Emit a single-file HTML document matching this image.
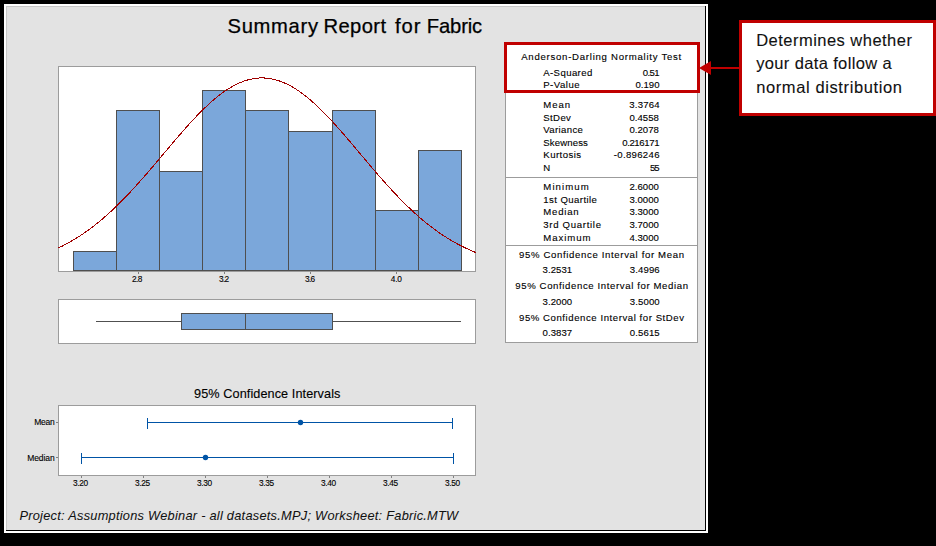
<!DOCTYPE html>
<html><head><meta charset="utf-8"><style>
html,body{margin:0;padding:0;background:#000;width:936px;height:546px;overflow:hidden}
svg{display:block}
</style></head><body>
<svg width="936" height="546" viewBox="0 0 936 546" font-family="'Liberation Sans', sans-serif">
<rect x="0" y="0" width="936" height="546" fill="#000"/>
<rect x="4" y="4" width="704" height="529" fill="#fff"/>
<rect x="6" y="6" width="700" height="525" fill="#000"/>
<rect x="6" y="6" width="699" height="524" fill="#C8C8C8"/>
<rect x="7" y="7" width="698" height="523" fill="#E3E3E3"/>
<g fill="#000" stroke="#000" stroke-width="0.25"><text x="227.50" y="33" font-size="20.2" textLength="90.50" lengthAdjust="spacing">Summary</text><text x="323.50" y="33" font-size="20.2" textLength="62.50" lengthAdjust="spacing">Report</text><text x="395.00" y="33" font-size="20.2" textLength="25.60" lengthAdjust="spacing">for</text><text x="426.80" y="33" font-size="20.2" textLength="55.40" lengthAdjust="spacing">Fabric</text></g>
<!-- histogram -->
<rect x="58.5" y="66.5" width="417" height="205" fill="#fff" stroke="#9C9C9C"/>
<rect x="73.5" y="251.5" width="43" height="19" fill="#7BA7DA" stroke="#4F4F4F" stroke-width="1"/><rect x="116.5" y="110.5" width="43" height="160" fill="#7BA7DA" stroke="#4F4F4F" stroke-width="1"/><rect x="159.5" y="171.5" width="43" height="99" fill="#7BA7DA" stroke="#4F4F4F" stroke-width="1"/><rect x="202.5" y="90.5" width="43" height="180" fill="#7BA7DA" stroke="#4F4F4F" stroke-width="1"/><rect x="245.5" y="110.5" width="43" height="160" fill="#7BA7DA" stroke="#4F4F4F" stroke-width="1"/><rect x="288.5" y="131.5" width="44" height="139" fill="#7BA7DA" stroke="#4F4F4F" stroke-width="1"/><rect x="332.5" y="110.5" width="43" height="160" fill="#7BA7DA" stroke="#4F4F4F" stroke-width="1"/><rect x="375.5" y="210.5" width="43" height="60" fill="#7BA7DA" stroke="#4F4F4F" stroke-width="1"/><rect x="418.5" y="150.5" width="43" height="120" fill="#7BA7DA" stroke="#4F4F4F" stroke-width="1"/>
<svg x="58" y="66" width="418" height="206" viewBox="58 66 418 206" overflow="hidden">
<polyline points="56.0,249.08 56.5,248.85 57.0,248.62 57.5,248.39 58.0,248.15 58.5,247.92 59.0,247.68 59.5,247.44 60.0,247.19 60.5,246.95 61.0,246.70 61.5,246.45 62.0,246.20 62.5,245.95 63.0,245.70 63.5,245.44 64.0,245.18 64.5,244.92 65.0,244.66 65.5,244.39 66.0,244.13 66.5,243.86 67.0,243.59 67.5,243.32 68.0,243.04 68.5,242.76 69.0,242.48 69.5,242.20 70.0,241.92 70.5,241.64 71.0,241.35 71.5,241.06 72.0,240.77 72.5,240.47 73.0,240.18 73.5,239.88 74.0,239.58 74.5,239.28 75.0,238.97 75.5,238.67 76.0,238.36 76.5,238.05 77.0,237.74 77.5,237.42 78.0,237.10 78.5,236.79 79.0,236.46 79.5,236.14 80.0,235.81 80.5,235.49 81.0,235.16 81.5,234.82 82.0,234.49 82.5,234.15 83.0,233.81 83.5,233.47 84.0,233.13 84.5,232.78 85.0,232.44 85.5,232.09 86.0,231.73 86.5,231.38 87.0,231.02 87.5,230.67 88.0,230.30 88.5,229.94 89.0,229.58 89.5,229.21 90.0,228.84 90.5,228.47 91.0,228.09 91.5,227.72 92.0,227.34 92.5,226.96 93.0,226.57 93.5,226.19 94.0,225.80 94.5,225.41 95.0,225.02 95.5,224.62 96.0,224.23 96.5,223.83 97.0,223.43 97.5,223.02 98.0,222.62 98.5,222.21 99.0,221.80 99.5,221.39 100.0,220.97 100.5,220.56 101.0,220.14 101.5,219.72 102.0,219.30 102.5,218.87 103.0,218.44 103.5,218.01 104.0,217.58 104.5,217.15 105.0,216.71 105.5,216.27 106.0,215.83 106.5,215.39 107.0,214.95 107.5,214.50 108.0,214.05 108.5,213.60 109.0,213.15 109.5,212.69 110.0,212.23 110.5,211.77 111.0,211.31 111.5,210.85 112.0,210.38 112.5,209.91 113.0,209.44 113.5,208.97 114.0,208.50 114.5,208.02 115.0,207.54 115.5,207.06 116.0,206.58 116.5,206.10 117.0,205.61 117.5,205.12 118.0,204.63 118.5,204.14 119.0,203.65 119.5,203.15 120.0,202.65 120.5,202.15 121.0,201.65 121.5,201.15 122.0,200.64 122.5,200.14 123.0,199.63 123.5,199.12 124.0,198.60 124.5,198.09 125.0,197.57 125.5,197.06 126.0,196.54 126.5,196.01 127.0,195.49 127.5,194.97 128.0,194.44 128.5,193.91 129.0,193.38 129.5,192.85 130.0,192.32 130.5,191.78 131.0,191.24 131.5,190.71 132.0,190.17 132.5,189.62 133.0,189.08 133.5,188.54 134.0,187.99 134.5,187.44 135.0,186.89 135.5,186.34 136.0,185.79 136.5,185.24 137.0,184.69 137.5,184.13 138.0,183.57 138.5,183.01 139.0,182.45 139.5,181.89 140.0,181.33 140.5,180.77 141.0,180.20 141.5,179.64 142.0,179.07 142.5,178.50 143.0,177.93 143.5,177.36 144.0,176.79 144.5,176.21 145.0,175.64 145.5,175.07 146.0,174.49 146.5,173.91 147.0,173.33 147.5,172.76 148.0,172.18 148.5,171.60 149.0,171.01 149.5,170.43 150.0,169.85 150.5,169.26 151.0,168.68 151.5,168.10 152.0,167.51 152.5,166.92 153.0,166.34 153.5,165.75 154.0,165.16 154.5,164.57 155.0,163.98 155.5,163.39 156.0,162.80 156.5,162.21 157.0,161.62 157.5,161.02 158.0,160.43 158.5,159.84 159.0,159.25 159.5,158.65 160.0,158.06 160.5,157.47 161.0,156.87 161.5,156.28 162.0,155.68 162.5,155.09 163.0,154.50 163.5,153.90 164.0,153.31 164.5,152.71 165.0,152.12 165.5,151.52 166.0,150.93 166.5,150.34 167.0,149.74 167.5,149.15 168.0,148.56 168.5,147.96 169.0,147.37 169.5,146.78 170.0,146.19 170.5,145.59 171.0,145.00 171.5,144.41 172.0,143.82 172.5,143.23 173.0,142.64 173.5,142.05 174.0,141.47 174.5,140.88 175.0,140.29 175.5,139.71 176.0,139.12 176.5,138.54 177.0,137.95 177.5,137.37 178.0,136.79 178.5,136.21 179.0,135.63 179.5,135.05 180.0,134.47 180.5,133.90 181.0,133.32 181.5,132.75 182.0,132.17 182.5,131.60 183.0,131.03 183.5,130.46 184.0,129.89 184.5,129.33 185.0,128.76 185.5,128.20 186.0,127.64 186.5,127.07 187.0,126.51 187.5,125.96 188.0,125.40 188.5,124.85 189.0,124.29 189.5,123.74 190.0,123.19 190.5,122.64 191.0,122.10 191.5,121.55 192.0,121.01 192.5,120.47 193.0,119.93 193.5,119.40 194.0,118.86 194.5,118.33 195.0,117.80 195.5,117.27 196.0,116.75 196.5,116.22 197.0,115.70 197.5,115.18 198.0,114.66 198.5,114.15 199.0,113.64 199.5,113.13 200.0,112.62 200.5,112.11 201.0,111.61 201.5,111.11 202.0,110.61 202.5,110.12 203.0,109.63 203.5,109.14 204.0,108.65 204.5,108.17 205.0,107.68 205.5,107.21 206.0,106.73 206.5,106.26 207.0,105.79 207.5,105.32 208.0,104.86 208.5,104.40 209.0,103.94 209.5,103.48 210.0,103.03 210.5,102.58 211.0,102.14 211.5,101.69 212.0,101.25 212.5,100.82 213.0,100.39 213.5,99.96 214.0,99.53 214.5,99.11 215.0,98.69 215.5,98.27 216.0,97.86 216.5,97.45 217.0,97.05 217.5,96.65 218.0,96.25 218.5,95.85 219.0,95.46 219.5,95.07 220.0,94.69 220.5,94.31 221.0,93.93 221.5,93.56 222.0,93.19 222.5,92.83 223.0,92.47 223.5,92.11 224.0,91.76 224.5,91.41 225.0,91.06 225.5,90.72 226.0,90.39 226.5,90.05 227.0,89.72 227.5,89.40 228.0,89.08 228.5,88.76 229.0,88.45 229.5,88.14 230.0,87.84 230.5,87.54 231.0,87.24 231.5,86.95 232.0,86.66 232.5,86.38 233.0,86.10 233.5,85.83 234.0,85.56 234.5,85.29 235.0,85.03 235.5,84.78 236.0,84.53 236.5,84.28 237.0,84.04 237.5,83.80 238.0,83.56 238.5,83.33 239.0,83.11 239.5,82.89 240.0,82.67 240.5,82.46 241.0,82.26 241.5,82.05 242.0,81.86 242.5,81.67 243.0,81.48 243.5,81.30 244.0,81.12 244.5,80.94 245.0,80.78 245.5,80.61 246.0,80.45 246.5,80.30 247.0,80.15 247.5,80.00 248.0,79.86 248.5,79.73 249.0,79.60 249.5,79.47 250.0,79.35 250.5,79.24 251.0,79.13 251.5,79.02 252.0,78.92 252.5,78.83 253.0,78.73 253.5,78.65 254.0,78.57 254.5,78.49 255.0,78.42 255.5,78.35 256.0,78.29 256.5,78.24 257.0,78.18 257.5,78.14 258.0,78.10 258.5,78.06 259.0,78.03 259.5,78.00 260.0,77.98 260.5,77.96 261.0,77.95 261.5,77.95 262.0,77.94 262.5,77.95 263.0,77.96 263.5,77.97 264.0,77.99 264.5,78.01 265.0,78.04 265.5,78.07 266.0,78.11 266.5,78.15 267.0,78.20 267.5,78.25 268.0,78.31 268.5,78.38 269.0,78.44 269.5,78.52 270.0,78.59 270.5,78.68 271.0,78.77 271.5,78.86 272.0,78.96 272.5,79.06 273.0,79.17 273.5,79.28 274.0,79.40 274.5,79.52 275.0,79.64 275.5,79.78 276.0,79.91 276.5,80.05 277.0,80.20 277.5,80.35 278.0,80.51 278.5,80.67 279.0,80.83 279.5,81.00 280.0,81.18 280.5,81.36 281.0,81.54 281.5,81.73 282.0,81.93 282.5,82.12 283.0,82.33 283.5,82.54 284.0,82.75 284.5,82.97 285.0,83.19 285.5,83.41 286.0,83.64 286.5,83.88 287.0,84.12 287.5,84.36 288.0,84.61 288.5,84.87 289.0,85.12 289.5,85.39 290.0,85.65 290.5,85.92 291.0,86.20 291.5,86.48 292.0,86.76 292.5,87.05 293.0,87.34 293.5,87.64 294.0,87.94 294.5,88.25 295.0,88.56 295.5,88.87 296.0,89.19 296.5,89.51 297.0,89.84 297.5,90.17 298.0,90.50 298.5,90.84 299.0,91.18 299.5,91.53 300.0,91.88 300.5,92.24 301.0,92.59 301.5,92.96 302.0,93.32 302.5,93.69 303.0,94.07 303.5,94.44 304.0,94.82 304.5,95.21 305.0,95.60 305.5,95.99 306.0,96.39 306.5,96.78 307.0,97.19 307.5,97.59 308.0,98.00 308.5,98.42 309.0,98.83 309.5,99.26 310.0,99.68 310.5,100.11 311.0,100.54 311.5,100.97 312.0,101.41 312.5,101.85 313.0,102.29 313.5,102.74 314.0,103.19 314.5,103.64 315.0,104.10 315.5,104.56 316.0,105.02 316.5,105.48 317.0,105.95 317.5,106.42 318.0,106.90 318.5,107.37 319.0,107.85 319.5,108.33 320.0,108.82 320.5,109.31 321.0,109.80 321.5,110.29 322.0,110.79 322.5,111.29 323.0,111.79 323.5,112.29 324.0,112.80 324.5,113.30 325.0,113.81 325.5,114.33 326.0,114.84 326.5,115.36 327.0,115.88 327.5,116.40 328.0,116.93 328.5,117.46 329.0,117.98 329.5,118.52 330.0,119.05 330.5,119.58 331.0,120.12 331.5,120.66 332.0,121.20 332.5,121.74 333.0,122.29 333.5,122.83 334.0,123.38 334.5,123.93 335.0,124.49 335.5,125.04 336.0,125.59 336.5,126.15 337.0,126.71 337.5,127.27 338.0,127.83 338.5,128.39 339.0,128.96 339.5,129.52 340.0,130.09 340.5,130.66 341.0,131.23 341.5,131.80 342.0,132.37 342.5,132.95 343.0,133.52 343.5,134.10 344.0,134.67 344.5,135.25 345.0,135.83 345.5,136.41 346.0,136.99 346.5,137.57 347.0,138.16 347.5,138.74 348.0,139.33 348.5,139.91 349.0,140.50 349.5,141.08 350.0,141.67 350.5,142.26 351.0,142.85 351.5,143.44 352.0,144.03 352.5,144.62 353.0,145.21 353.5,145.80 354.0,146.39 354.5,146.98 355.0,147.58 355.5,148.17 356.0,148.76 356.5,149.36 357.0,149.95 357.5,150.54 358.0,151.14 358.5,151.73 359.0,152.33 359.5,152.92 360.0,153.51 360.5,154.11 361.0,154.70 361.5,155.30 362.0,155.89 362.5,156.49 363.0,157.08 363.5,157.67 364.0,158.27 364.5,158.86 365.0,159.45 365.5,160.05 366.0,160.64 366.5,161.23 367.0,161.82 367.5,162.41 368.0,163.00 368.5,163.60 369.0,164.19 369.5,164.77 370.0,165.36 370.5,165.95 371.0,166.54 371.5,167.13 372.0,167.71 372.5,168.30 373.0,168.88 373.5,169.47 374.0,170.05 374.5,170.63 375.0,171.22 375.5,171.80 376.0,172.38 376.5,172.96 377.0,173.54 377.5,174.11 378.0,174.69 378.5,175.27 379.0,175.84 379.5,176.41 380.0,176.99 380.5,177.56 381.0,178.13 381.5,178.70 382.0,179.27 382.5,179.83 383.0,180.40 383.5,180.96 384.0,181.53 384.5,182.09 385.0,182.65 385.5,183.21 386.0,183.77 386.5,184.32 387.0,184.88 387.5,185.43 388.0,185.99 388.5,186.54 389.0,187.09 389.5,187.63 390.0,188.18 390.5,188.73 391.0,189.27 391.5,189.81 392.0,190.35 392.5,190.89 393.0,191.43 393.5,191.97 394.0,192.50 394.5,193.03 395.0,193.57 395.5,194.09 396.0,194.62 396.5,195.15 397.0,195.67 397.5,196.20 398.0,196.72 398.5,197.24 399.0,197.75 399.5,198.27 400.0,198.78 400.5,199.30 401.0,199.81 401.5,200.31 402.0,200.82 402.5,201.32 403.0,201.83 403.5,202.33 404.0,202.83 404.5,203.32 405.0,203.82 405.5,204.31 406.0,204.80 406.5,205.29 407.0,205.78 407.5,206.27 408.0,206.75 408.5,207.23 409.0,207.71 409.5,208.19 410.0,208.66 410.5,209.14 411.0,209.61 411.5,210.08 412.0,210.54 412.5,211.01 413.0,211.47 413.5,211.93 414.0,212.39 414.5,212.85 415.0,213.30 415.5,213.76 416.0,214.21 416.5,214.65 417.0,215.10 417.5,215.54 418.0,215.99 418.5,216.43 419.0,216.86 419.5,217.30 420.0,217.73 420.5,218.16 421.0,218.59 421.5,219.02 422.0,219.44 422.5,219.87 423.0,220.29 423.5,220.70 424.0,221.12 424.5,221.53 425.0,221.94 425.5,222.35 426.0,222.76 426.5,223.16 427.0,223.57 427.5,223.97 428.0,224.36 428.5,224.76 429.0,225.15 429.5,225.55 430.0,225.93 430.5,226.32 431.0,226.71 431.5,227.09 432.0,227.47 432.5,227.85 433.0,228.22 433.5,228.60 434.0,228.97 434.5,229.34 435.0,229.70 435.5,230.07 436.0,230.43 436.5,230.79 437.0,231.15 437.5,231.50 438.0,231.86 438.5,232.21 439.0,232.56 439.5,232.91 440.0,233.25 440.5,233.59 441.0,233.93 441.5,234.27 442.0,234.61 442.5,234.94 443.0,235.27 443.5,235.60 444.0,235.93 444.5,236.25 445.0,236.58 445.5,236.90 446.0,237.22 446.5,237.53 447.0,237.85 447.5,238.16 448.0,238.47 448.5,238.78 449.0,239.08 449.5,239.38 450.0,239.69 450.5,239.98 451.0,240.28 451.5,240.58 452.0,240.87 452.5,241.16 453.0,241.45 453.5,241.74 454.0,242.02 454.5,242.30 455.0,242.58 455.5,242.86 456.0,243.14 456.5,243.41 457.0,243.68 457.5,243.95 458.0,244.22 458.5,244.49 459.0,244.75 459.5,245.01 460.0,245.27 460.5,245.53 461.0,245.79 461.5,246.04 462.0,246.29 462.5,246.54 463.0,246.79 463.5,247.04 464.0,247.28 464.5,247.52 465.0,247.76 465.5,248.00 466.0,248.24 466.5,248.47 467.0,248.70 467.5,248.93 468.0,249.16 468.5,249.39 469.0,249.61 469.5,249.84 470.0,250.06 470.5,250.28 471.0,250.50 471.5,250.71 472.0,250.92 472.5,251.14 473.0,251.35 473.5,251.56 474.0,251.76 474.5,251.97 475.0,252.17 475.5,252.37 476.0,252.57 476.5,252.77 477.0,252.97" fill="none" stroke="#A00000" stroke-width="1" shape-rendering="crispEdges"/>
</svg>
<!-- boxplot -->
<rect x="58.5" y="299.5" width="417" height="44" fill="#fff" stroke="#9C9C9C"/>
<rect x="96" y="321" width="365" height="1" fill="#505050"/>
<rect x="181.5" y="313.5" width="151" height="16" fill="#7BA7DA" stroke="#4F4F4F"/>
<rect x="245" y="313" width="1" height="17" fill="#4F4F4F"/>
<!-- CI -->
<rect x="58.5" y="405.5" width="417" height="70" fill="#fff" stroke="#9C9C9C"/>
<rect x="56" y="422" width="2" height="1" fill="#808080"/>
<rect x="56" y="457" width="2" height="1" fill="#808080"/>
<g fill="#0054A6">
<rect x="147" y="422" width="306" height="1"/>
<rect x="147" y="418" width="1" height="11"/>
<rect x="452" y="418" width="1" height="11"/>
<circle cx="300.5" cy="422.5" r="2.7"/>
<rect x="81" y="457" width="373" height="1"/>
<rect x="81" y="453" width="1" height="11"/>
<rect x="453" y="453" width="1" height="11"/>
<circle cx="205.5" cy="457.5" r="2.7"/>
</g>
<rect x="138" y="272" width="1" height="2" fill="#808080"/><rect x="224" y="272" width="1" height="2" fill="#808080"/><rect x="310" y="272" width="1" height="2" fill="#808080"/><rect x="396" y="272" width="1" height="2" fill="#808080"/><rect x="81" y="476" width="1" height="2" fill="#808080"/><rect x="143" y="476" width="1" height="2" fill="#808080"/><rect x="205" y="476" width="1" height="2" fill="#808080"/><rect x="267" y="476" width="1" height="2" fill="#808080"/><rect x="329" y="476" width="1" height="2" fill="#808080"/><rect x="391" y="476" width="1" height="2" fill="#808080"/><rect x="453" y="476" width="1" height="2" fill="#808080"/>
<!-- stats table -->
<rect x="505.5" y="42.5" width="192" height="300" fill="#fff" stroke="#9C9C9C"/>
<rect x="506" y="177" width="191" height="1" fill="#9C9C9C"/>
<rect x="506" y="245" width="191" height="1" fill="#9C9C9C"/>
<g fill="#000" stroke="#000" stroke-width="0.12"><text x="521.20" y="60" font-size="9.6" textLength="160.00" lengthAdjust="spacing">Anderson-Darling Normality Test</text><text x="543.20" y="75.7" font-size="9.6" textLength="49.10" lengthAdjust="spacing">A-Squared</text><text x="642.70" y="75.7" font-size="9.6" textLength="16.80" lengthAdjust="spacing">0.51</text><text x="543.20" y="87.6" font-size="9.6" textLength="36.50" lengthAdjust="spacing">P-Value</text><text x="635.50" y="87.6" font-size="9.6">0.190</text><text x="543.30" y="108" font-size="9.6" textLength="26.70" lengthAdjust="spacing">Mean</text><text x="629.30" y="108" font-size="9.6" textLength="30.20" lengthAdjust="spacing">3.3764</text><text x="543.30" y="120.6" font-size="9.6" textLength="27.60" lengthAdjust="spacing">StDev</text><text x="629.50" y="120.6" font-size="9.6">0.4558</text><text x="543.30" y="133.1" font-size="9.6" textLength="39.60" lengthAdjust="spacing">Variance</text><text x="629.50" y="133.1" font-size="9.6">0.2078</text><text x="543.30" y="145.7" font-size="9.6" textLength="44.60" lengthAdjust="spacing">Skewness</text><text x="622.20" y="145.7" font-size="9.6" textLength="37.30" lengthAdjust="spacing">0.216171</text><text x="543.30" y="158.2" font-size="9.6" textLength="37.80" lengthAdjust="spacing">Kurtosis</text><text x="613.80" y="158.2" font-size="9.6" textLength="45.70" lengthAdjust="spacing">-0.896246</text><text x="543.30" y="170.8" font-size="9.6" textLength="7.20" lengthAdjust="spacing">N</text><text x="649.90" y="170.8" font-size="9.6" textLength="9.60" lengthAdjust="spacing">55</text><text x="543.30" y="189.6" font-size="9.6" textLength="45.50" lengthAdjust="spacing">Minimum</text><text x="629.50" y="189.6" font-size="9.6">2.6000</text><text x="543.30" y="202.8" font-size="9.6" textLength="53.60" lengthAdjust="spacing">1st Quartile</text><text x="629.50" y="202.8" font-size="9.6">3.0000</text><text x="543.30" y="215.4" font-size="9.6" textLength="35.40" lengthAdjust="spacing">Median</text><text x="629.50" y="215.4" font-size="9.6">3.3000</text><text x="543.30" y="227.7" font-size="9.6" textLength="57.70" lengthAdjust="spacing">3rd Quartile</text><text x="629.50" y="227.7" font-size="9.6">3.7000</text><text x="543.30" y="240.8" font-size="9.6" textLength="47.30" lengthAdjust="spacing">Maximum</text><text x="629.50" y="240.8" font-size="9.6">4.3000</text><text x="519.00" y="257.5" font-size="9.6" textLength="165.00" lengthAdjust="spacing">95% Confidence Interval for Mean</text><text x="542.60" y="273.2" font-size="9.6" textLength="29.60" lengthAdjust="spacing">3.2531</text><text x="629.70" y="273.2" font-size="9.6" textLength="30.00" lengthAdjust="spacing">3.4996</text><text x="515.30" y="288.9" font-size="9.6" textLength="172.70" lengthAdjust="spacing">95% Confidence Interval for Median</text><text x="542.60" y="305" font-size="9.6" textLength="29.60" lengthAdjust="spacing">3.2000</text><text x="629.70" y="305" font-size="9.6" textLength="30.00" lengthAdjust="spacing">3.5000</text><text x="519.00" y="320.8" font-size="9.6" textLength="165.00" lengthAdjust="spacing">95% Confidence Interval for StDev</text><text x="542.60" y="336" font-size="9.6" textLength="29.60" lengthAdjust="spacing">0.3837</text><text x="629.70" y="336" font-size="9.6" textLength="30.00" lengthAdjust="spacing">0.5615</text><text x="194.10" y="397.8" font-size="12.7" textLength="146.30" lengthAdjust="spacing">95% Confidence Intervals</text><text x="34.30" y="424.8" font-size="8.5" textLength="20.40" lengthAdjust="spacing">Mean</text><text x="27.20" y="460.8" font-size="8.5" textLength="27.50" lengthAdjust="spacing">Median</text><text x="131.90" y="282" font-size="8.3" textLength="10.50" lengthAdjust="spacing">2.8</text><text x="219.00" y="282" font-size="8.3" textLength="10.20" lengthAdjust="spacing">3.2</text><text x="305.00" y="282" font-size="8.3" textLength="10.20" lengthAdjust="spacing">3.6</text><text x="390.70" y="282" font-size="8.3" textLength="11.20" lengthAdjust="spacing">4.0</text><text x="72.90" y="486" font-size="8.3" textLength="15.30" lengthAdjust="spacing">3.20</text><text x="134.90" y="486" font-size="8.3" textLength="15.30" lengthAdjust="spacing">3.25</text><text x="196.90" y="486" font-size="8.3" textLength="15.30" lengthAdjust="spacing">3.30</text><text x="258.90" y="486" font-size="8.3" textLength="15.30" lengthAdjust="spacing">3.35</text><text x="320.90" y="486" font-size="8.3" textLength="15.30" lengthAdjust="spacing">3.40</text><text x="382.90" y="486" font-size="8.3" textLength="15.30" lengthAdjust="spacing">3.45</text><text x="444.90" y="486" font-size="8.3" textLength="15.30" lengthAdjust="spacing">3.50</text></g>
<g fill="#111" stroke="#111" stroke-width="0.05"><text x="19.40" y="519.7" font-size="12.8" textLength="438.80" lengthAdjust="spacing" font-style="italic">Project: Assumptions Webinar - all datasets.MPJ; Worksheet: Fabric.MTW</text></g>
<!-- red box -->
<rect x="505.5" y="43.5" width="193" height="48" fill="none" stroke="#C00000" stroke-width="3"/>
<!-- callout -->
<rect x="740.5" y="21.5" width="194" height="93" fill="#fff" stroke="#C00000" stroke-width="3"/>
<rect x="711" y="67" width="29" height="2" fill="#C00000"/>
<polygon points="699,68 711,61 711,75" fill="#C00000"/>
<g fill="#111" stroke="#111" stroke-width="0.1"><text x="756.20" y="45.7" font-size="16.5" textLength="155.70" lengthAdjust="spacing">Determines whether</text><text x="756.20" y="69.3" font-size="16.5" textLength="135.40" lengthAdjust="spacing">your data follow a</text><text x="756.20" y="93" font-size="16.5" textLength="145.70" lengthAdjust="spacing">normal distribution</text></g>
</svg>
</body></html>
